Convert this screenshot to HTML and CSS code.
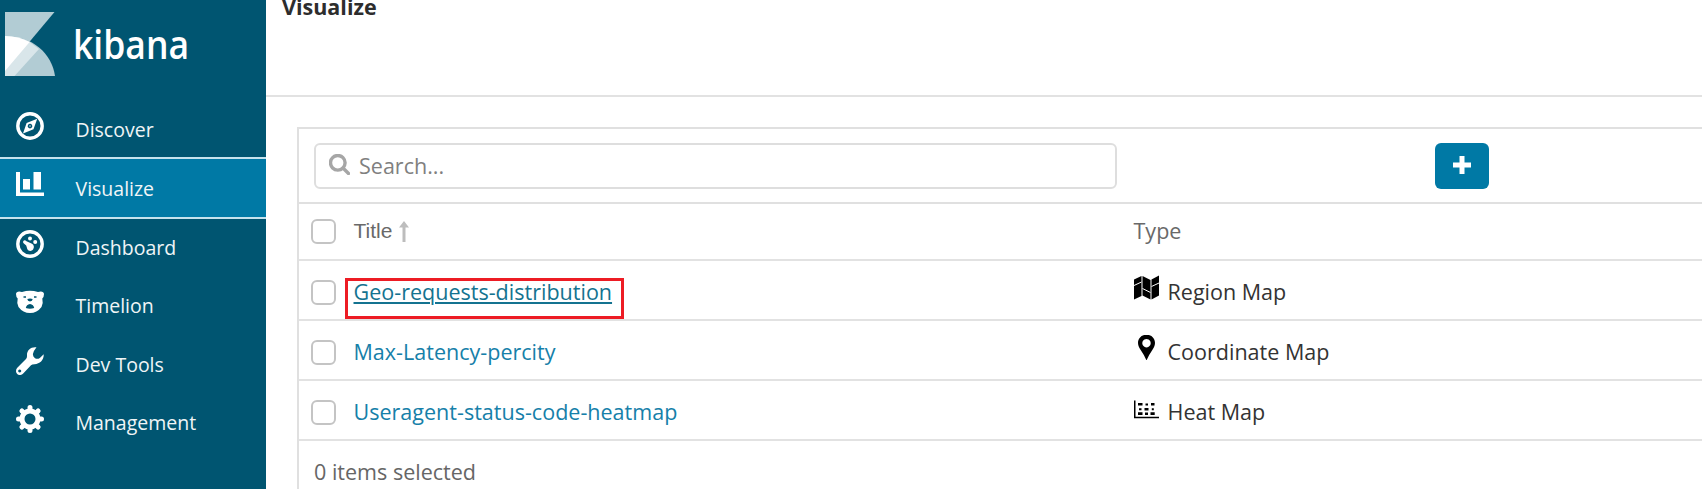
FILE: index.html
```html
<!DOCTYPE html>
<html lang="en">
<head>
<meta charset="utf-8">
<title>Visualize</title>
<link rel="stylesheet" href="styles.css">
</head>
<body>
<div class="app">
  <aside class="sidebar">
    <div class="brand">
      <svg class="brand-mark" viewBox="0 0 50 64">
        <path d="M0 0H49.500L0 59Z" fill="#b2ccd4"/>
        <path d="M0 24C28 24 47 42 50 64H0Z" fill="#b2ccd4"/>
        <path d="M0 24C9 24 17 26 24.600 30L34 37L9.500 64H0Z" fill="#d9e6ea"/>
        <path d="M0 24C9 24 17 26 24.600 30L0 59Z" fill="#fff"/>
      </svg>
      <svg class="brand-name" viewBox="0 0 120 60"><text x="0" y="38" textLength="116" lengthAdjust="spacingAndGlyphs">kibana</text></svg>
    </div>
    <nav class="nav">
      <a class="nav-item"><svg class="nav-icon" viewBox="0 0 28 28"><circle cx="14" cy="14" r="12.200" fill="none" stroke="#fff" stroke-width="3.400"/><path fill="#fff" fill-rule="evenodd" d="M21.200 6.800L17.500 17.200L7 21.600L10.600 11Z M14 11.800a2.300 2.300 0 1 0 .01 0Z"/><circle cx="14" cy="14.100" r="1" fill="#fff" opacity=".5"/></svg><span>Discover</span></a>
      <a class="nav-item active"><svg class="nav-icon" viewBox="0 0 28 28"><path fill="#fff" d="M0 2h4v20.500h24V26H0ZM7 9h7v10.500H7ZM17.500 2h7.500v17.500h-7.500Z"/></svg><span>Visualize</span></a>
      <a class="nav-item"><svg class="nav-icon" viewBox="0 0 28 28"><circle cx="14" cy="14" r="12.200" fill="none" stroke="#fff" stroke-width="3.400"/><path fill="#fff" d="M7.200 11.200C8 10 9.400 10.200 10.500 11.200L15.500 13.600C18 14.800 18.500 17 17.200 19.200C15.800 21.400 12.700 21.600 11.400 19.200L10.200 15.600L7.600 13.200Q6.700 12.200 7.200 11.200Z"/><circle cx="14" cy="8.600" r="2" fill="#fff"/><circle cx="19.200" cy="12" r="2" fill="#fff"/></svg><span>Dashboard</span></a>
      <a class="nav-item"><svg class="nav-icon" viewBox="0 0 28 28"><path fill="#fff" fill-rule="evenodd" d="M0 6C0 3.500 3 2.700 6 4Q14 1.600 22 4C25 2.700 28 3.500 28 6Q28 9 26.300 10.500Q27.500 15 25.500 19Q21 25 14 25Q7 25 2.500 19Q.5 15 1.700 10.500Q0 9 0 6ZM7.500 8.300h2.500v1.500H7.500ZM18 8.300h2.500v1.500H18ZM11.300 11Q14 10 16.700 11Q16.500 13.200 14 13.400Q11.500 13.200 11.300 11ZM14 16Q10.400 16.500 9.800 20Q14 21.300 18.200 20Q17.600 16.500 14 16Z"/></svg><span>Timelion</span></a>
      <a class="nav-item"><svg class="nav-icon" viewBox="0 0 28 28"><path fill="#fff" fill-rule="evenodd" d="M20.500 0.300C15 -.5 10.800 3.200 11 8.200Q11.200 10.700 10 12L1.300 20.800C-.7 23 -.2 26 1.500 27.300C3.500 28.700 5.800 28 7.200 26.500L15 18.200Q16 17.200 18.500 17.200C24 17 28 13 27.700 7.200L23.800 11Q21.500 12.600 19 11.200Q16.500 9.500 17 6.700Q17.300 4.300 20.500 .3ZM3.700 22.600a1.500 1.500 0 1 1 -.01 0Z"/></svg><span>Dev Tools</span></a>
      <a class="nav-item"><svg class="nav-icon" viewBox="0 0 28 28"><circle cx="14" cy="14" r="8" fill="none" stroke="#fff" stroke-width="5"/><g stroke="#fff" stroke-width="5" stroke-linecap="round"><path d="M14 2.500v3M14 22.500v3M2.500 14h3M22.500 14h3M5.900 5.900l2.100 2.100M20 20l2.100 2.100M5.900 22.100l2.100-2.100M20 8l2.100-2.100"/></g></svg><span>Management</span></a>
    </nav>
  </aside>
  <main class="main">
    <header class="page-header"><h1>Visualize</h1></header>
    <section class="panel">
      <div class="toolbar">
        <div class="search">
          <svg class="search-icon" viewBox="0 0 21 21"><circle cx="8.800" cy="8.800" r="7.300"/><path d="M14 14l5.500 5.500"/></svg>
          <span>Search...</span>
        </div>
        <button class="add"><svg viewBox="0 0 18 18"><path d="M9 0v18M0 9h18"/></svg></button>
      </div>
      <div class="row head">
        <i class="check"></i>
        <span class="title sort">Title<svg viewBox="0 0 10 21"><path d="M5 0L10 6.500H6.500V21H3.500V6.500H0Z"/></svg></span>
        <span class="type">Type</span>
      </div>
      <div class="row">
        <i class="check"></i>
        <span class="title"><a class="link geo">Geo-requests-distribution</a><i class="highlight"></i></span>
        <span class="type"><svg class="type-icon" viewBox="0 0 25 25"><path d="M0 4.500L7.500 1V21L0 24.500ZM8.500 1L16.500 5V24.500L8.500 20.500ZM17.500 4.500L25 .5V20.500L17.500 24.500Z"/><path class="cut" d="M0 10.500L7.500 7M8.500 13.500L16.500 17.500M17.500 11.500L25 8"/></svg>Region Map</span>
      </div>
      <div class="row">
        <i class="check"></i>
        <span class="title"><a class="link">Max-Latency-percity</a></span>
        <span class="type"><svg class="type-icon" viewBox="0 0 25 25"><path fill-rule="evenodd" d="M12.500 -.3C7.500 -.3 4 3.400 4 8C4 11 5.500 13 7 15.500Q10.500 20.500 12.500 25.500Q14.500 20.500 18 15.500C19.500 13 21 11 21 8C21 3.400 17.500 -.3 12.500 -.3ZM12.500 4a4.200 4.200 0 1 1 -.01 0Z"/></svg>Coordinate Map</span>
      </div>
      <div class="row">
        <i class="check"></i>
        <span class="title"><a class="link">Useragent-status-code-heatmap</a></span>
        <span class="type"><svg class="type-icon" viewBox="0 0 25 25"><path d="M0 5.500h1.500v16.300H25v1.500H0ZM4 8h4.500v2.500H4ZM11.500 8.500h2.500v2h-2.500ZM17 8h3.500v2.500H17ZM5 13.200h2.500v2H5ZM10.500 13h4v2.500h-4ZM17.800 13.200h2v2h-2ZM4 17.300h4.500V20H4ZM11 17.500h3V20h-3ZM16.500 17.300h4.200V20h-4.200Z"/></svg>Heat Map</span>
      </div>
      <div class="footer">0 items selected</div>
    </section>
  </main>
</div>
</body>
</html>
```
FILE: styles.css
```css
* { box-sizing: border-box; }
body { margin: 0; background: #fff; font-family: "Open Sans", sans-serif; overflow: hidden; }
.app { display: flex; width: 1702px; height: 489px; overflow: hidden; }
.sidebar { width: 266px; flex: none; background: #005571; }
.brand { display: flex; align-items: flex-start; height: 98px; padding: 12px 0 0 4.500px; }
.brand-mark { width: 50px; height: 64px; }
.brand-name { width: 120px; height: 60px; margin: 9px 0 0 18px; fill: #fff; font: 600 39px "Open Sans", sans-serif; }
.nav-item { display: flex; align-items: center; height: 58.500px; padding-left: 16px; color: #f0f5f7; font-size: 19.500px; }
.nav-item span { padding-top: 5px; margin-left: 31.500px; }
.nav-icon { width: 28px; height: 28px; margin-top: -2px; }
.active { height: 62px; margin: 0 0 -3px; padding-bottom: 5px; background: #0079a5; border: solid #c5e3ee; border-width: 2px 0; position: relative; }
.active span { padding-top: 7px; }
.active .nav-icon { margin-top: -3px; }
.main { flex: 1; min-width: 0; }
.page-header { height: 97px; padding-left: 16px; border-bottom: 2px solid #e2e2e2; }
h1 { margin: 0; font-size: 21.500px; line-height: 14px; font-weight: 700; color: #2d2d2d; }
.panel { height: 370px; margin: 30px 0 0 31px; border: 2px solid #e0e0e0; border-width: 2px 0 0 2px; font-size: 21.540px; }
.toolbar { display: flex; height: 75px; padding: 14px 0 0 15px; border-bottom: 2px solid #e0e0e0; }
.search { display: flex; align-items: center; width: 803px; height: 46px; padding-left: 13px; border: 2px solid #dedede; border-radius: 6px; color: #808080; }
.search span { margin-top: -1px; }
.search-icon { width: 21px; height: 21px; margin: -3px 9px 0 0; fill: none; stroke: #a6a6a6; stroke-width: 3.400; stroke-linecap: round; }
.add { display: grid; place-items: center; width: 54px; height: 46px; margin: 0 0 0 318px; padding: 0 0 3px; border: 0; border-radius: 6px; background: #0079a5; }
.add svg { width: 18px; height: 18px; stroke: #fff; stroke-width: 5; }
.row { display: flex; align-items: center; height: 60px; border-bottom: 2px solid #e2e2e2; padding: 3px 0 0 12px; color: #333; }
.row .check { margin-top: 2px; }
.head { height: 57px; padding-top: 0; color: #696969; }
.head .type { margin-top: -2px; }
.row.head .check { margin-top: 0; }
.check { width: 25px; height: 25px; border: 2px solid #c4c4c4; border-radius: 6px; flex: none; }
.title { position: relative; width: 780px; margin-left: 17.500px; }
.sort { display: flex; align-items: center; margin-top: -1px; font-family: "Liberation Sans", sans-serif; font-size: 21px; }
.sort svg { width: 10px; height: 21px; margin-left: 7px; fill: #bdbdbd; }
.link { color: #1680a9; }
.geo { color: #147390; text-decoration: underline; text-decoration-thickness: 2px; text-underline-offset: 2px; }
.type { display: flex; align-items: center; }
.type-icon { width: 25px; height: 25px; margin: -9px 9px 0 0; fill: #000; }
.cut { stroke: #fff; stroke-width: 1; fill: none; }
.highlight { position: absolute; left: -8.500px; top: 1px; width: 279px; height: 41px; border: 3px solid #ed1c24; }
.footer { padding: 16px 0 0 15px; color: #666; }
```
